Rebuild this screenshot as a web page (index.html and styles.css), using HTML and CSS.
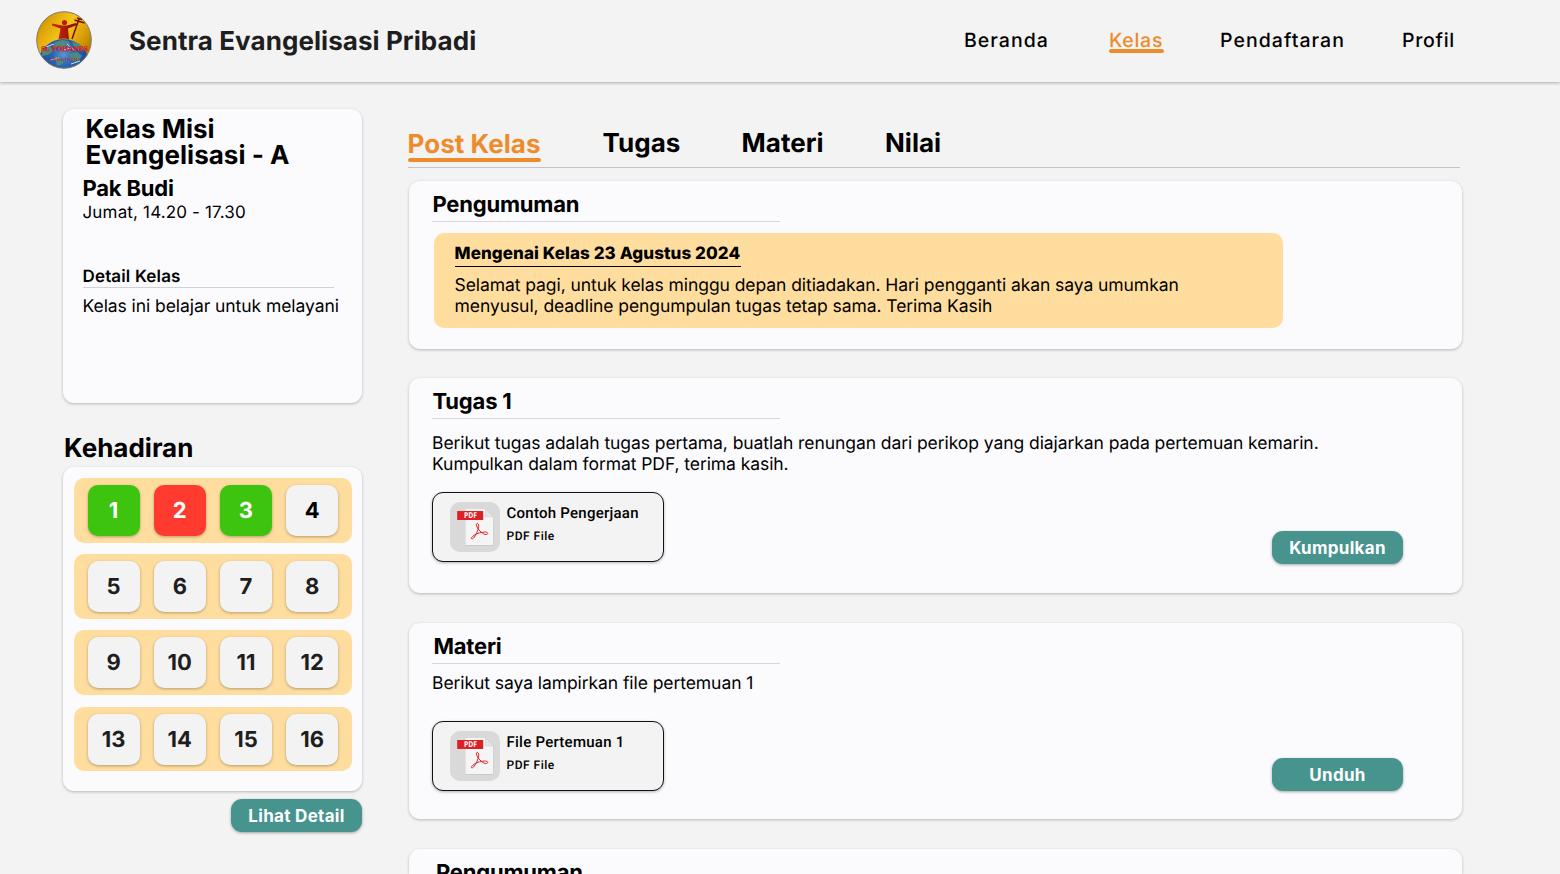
FILE: index.html
```html
<!DOCTYPE html>
<html lang="id">
<head>
<meta charset="utf-8">
<title>Sentra Evangelisasi Pribadi</title>
<link rel="stylesheet" href="styles.css">
</head>
<body>
<header class="topbar">
  <svg class="logo" viewBox="0 0 56 58">
    <defs>
      <linearGradient id="gold" x1="0" y1="0" x2="1" y2=".7">
        <stop offset="0" stop-color="#a87400"/><stop offset=".25" stop-color="#e0a60a"/>
        <stop offset=".5" stop-color="#f6c51c"/><stop offset=".75" stop-color="#dba008"/><stop offset="1" stop-color="#a87400"/>
      </linearGradient>
      <radialGradient id="sea" cx=".5" cy=".3" r=".7">
        <stop offset="0" stop-color="#5c95cb"/><stop offset=".3" stop-color="#2666b4"/><stop offset="1" stop-color="#0c3785"/>
      </radialGradient>
      <linearGradient id="robe" x1="0" y1="0" x2="1" y2="0">
        <stop offset="0" stop-color="#d8290c"/><stop offset="1" stop-color="#7d0c02"/>
      </linearGradient>
      <clipPath id="round"><ellipse cx="28" cy="29" rx="27.300" ry="28.300"/></clipPath>
    </defs>
    <g clip-path="url(#round)">
      <rect width="56" height="58" fill="url(#gold)"/>
      <circle cx="27.500" cy="54" r="26" fill="url(#sea)"/>
      <g fill="#4d8a7d">
        <path d="M19 31l7-2 6 1 3 3-5 2-3 4-5-3-5 1z"/>
        <path d="M36 30l7 3 5 5-4 2-6-3z"/>
        <path d="M6 39l8-4 4 4-6 5-6 1z"/>
        <path d="M33 43l8-2 5 4-5 6-6-2z"/>
        <path d="M19 45l7 2 1 6-6 2z"/>
      </g>
      <path d="M10 36l8-3m9 6l8-2m-21 12l9-2m8-14l7 6m-3 14l9-3" stroke="#c3dbe8" stroke-width="1" fill="none"/>
      <circle cx="28.500" cy="11.500" r="2.600" fill="#bd1d06"/>
      <path d="M16 12.500l10 2h5l9-2.500 1 2-9 3.500 1 11c-3-1.500-7-1.500-10.500 0l2-11-8.500-3z" fill="url(#robe)"/>
      <path d="M43 8l-7 20M38.500 9l10 3M41 7l5 1.500" stroke="#741004" stroke-width="1.500" fill="none"/>
    </g>
    <ellipse cx="28" cy="29" rx="27.300" ry="28.300" fill="none" stroke="#80796a" stroke-width="1"/>
    <text x="28.500" y="40.400" text-anchor="middle" textLength="47" lengthAdjust="spacingAndGlyphs" class="logo-name">St. YOHANES</text>
    <text x="28.500" y="49.500" text-anchor="middle" textLength="29" class="logo-sub">PENGINJIL</text>
  </svg>
  <div class="brand">Sentra Evangelisasi Pribadi</div>
  <nav class="nav">
    <a class="nav-item beranda">Beranda</a>
    <a class="nav-item kelas active">Kelas</a>
    <a class="nav-item pendaftaran">Pendaftaran</a>
    <a class="nav-item profil">Profil</a>
  </nav>
</header>

<main class="page">
  <aside class="sidebar">
    <section class="card class-card">
      <h1 class="class-name">Kelas Misi<br>Evangelisasi - A</h1>
      <div class="teacher">Pak Budi</div>
      <div class="schedule">Jumat, 14.20 - 17.30</div>
      <div class="detail-title">Detail Kelas</div>
      <div class="detail-text">Kelas ini belajar untuk melayani</div>
    </section>
    <h2 class="attendance-title">Kehadiran</h2>
    <section class="card attendance">
      <div class="week"><span class="tile present">1</span><span class="tile absent">2</span><span class="tile present">3</span><span class="tile next">4</span></div>
      <div class="week"><span class="tile">5</span><span class="tile">6</span><span class="tile">7</span><span class="tile">8</span></div>
      <div class="week"><span class="tile">9</span><span class="tile">10</span><span class="tile">11</span><span class="tile">12</span></div>
      <div class="week"><span class="tile">13</span><span class="tile">14</span><span class="tile">15</span><span class="tile">16</span></div>
    </section>
    <button class="btn detail-btn">Lihat Detail</button>
  </aside>

  <div class="content">
    <nav class="tabs">
      <a class="tab post active">Post Kelas</a>
      <a class="tab tugas">Tugas</a>
      <a class="tab materi">Materi</a>
      <a class="tab nilai">Nilai</a>
    </nav>

    <section class="card post-card announce">
      <h3 class="post-title">Pengumuman</h3>
      <div class="notice">
        <div class="notice-title">Mengenai Kelas 23 Agustus 2024</div>
        <p class="notice-text">Selamat pagi, untuk kelas minggu depan ditiadakan. Hari pengganti akan saya umumkan<br>menyusul, deadline pengumpulan tugas tetap sama. Terima Kasih</p>
      </div>
    </section>

    <section class="card post-card task">
      <h3 class="post-title">Tugas 1</h3>
      <p class="post-text">Berikut tugas adalah tugas pertama, buatlah renungan dari perikop yang diajarkan pada pertemuan kemarin.<br>Kumpulkan dalam format PDF, terima kasih.</p>
      <div class="post-foot">
        <div class="file">
          <svg class="file-icon" viewBox="0 0 50 50">
            <path d="M15.500 7.500h20.500l7.300 8v28.300H15.500z" fill="#c4c4c4"/>
            <path d="M15.500 7h20l7.500 8v28H15.500z" fill="#f5f5f5"/>
            <path d="M35.500 7v8H43z" fill="#e6e6e6" stroke="#c8c8c8" stroke-width=".5"/>
            <rect x="7.200" y="9" width="26" height="9" fill="#dd2025"/>
            <text x="20.400" y="16.400" text-anchor="middle" textLength="13" lengthAdjust="spacingAndGlyphs" class="pdf-label">PDF</text>
            <path d="M28.300 22.100c-1.600-2-2.700.4-1.200 3 1 2.300 4.200 5.600 6.700 6.900 2.300 1.200 4.700.1 3.700-1.200-1.400-1.600-7.400-.4-10.700 1-3.500 1.500-6.700 4.500-5 5 2.100.5 5-5.600 6.200-9.300.7-2.200 1-4.500.300-5.400z" fill="none" stroke="#dd2025" stroke-width="1"/>
          </svg>
          <div class="file-info"><div class="file-name">Contoh Pengerjaan</div><div class="file-type">PDF File</div></div>
        </div>
        <button class="btn submit">Kumpulkan</button>
      </div>
    </section>

    <section class="card post-card material">
      <h3 class="post-title">Materi</h3>
      <p class="post-text">Berikut saya lampirkan file pertemuan 1</p>
      <div class="post-foot">
        <div class="file">
          <svg class="file-icon" viewBox="0 0 50 50">
            <path d="M15.500 7.500h20.500l7.300 8v28.300H15.500z" fill="#c4c4c4"/>
            <path d="M15.500 7h20l7.500 8v28H15.500z" fill="#f5f5f5"/>
            <path d="M35.500 7v8H43z" fill="#e6e6e6" stroke="#c8c8c8" stroke-width=".5"/>
            <rect x="7.200" y="9" width="26" height="9" fill="#dd2025"/>
            <text x="20.400" y="16.400" text-anchor="middle" textLength="13" lengthAdjust="spacingAndGlyphs" class="pdf-label">PDF</text>
            <path d="M28.300 22.100c-1.600-2-2.700.4-1.200 3 1 2.300 4.200 5.600 6.700 6.900 2.300 1.200 4.700.1 3.700-1.200-1.400-1.600-7.400-.4-10.700 1-3.500 1.500-6.700 4.500-5 5 2.100.5 5-5.600 6.200-9.300.7-2.200 1-4.500.300-5.400z" fill="none" stroke="#dd2025" stroke-width="1"/>
          </svg>
          <div class="file-info"><div class="file-name">File Pertemuan 1</div><div class="file-type">PDF File</div></div>
        </div>
        <button class="btn download">Unduh</button>
      </div>
    </section>

    <section class="card post-card last">
      <h3 class="post-title">Pengumuman</h3>
    </section>
  </div>
</main>
</body>
</html>
```
FILE: styles.css
```css
* { box-sizing: border-box; }
body {
  margin: 0;
  height: 874px;
  overflow: hidden;
  background: #f3f3f3;
  color: #000;
  font-family: Inter, "Liberation Sans", sans-serif;
  text-rendering: geometricPrecision;
}
h1, h2, h3, p { margin: 0; }

.topbar {
  display: flex;
  height: 82px;
  padding: 11px 0 0 36px;
  background: #f3f3f3;
  box-shadow: 0 1px 3px rgba(0, 0, 0, .3);
}
.logo { width: 56px; height: 58px; }
.logo-name { font: bold 7px "Liberation Serif", serif; fill: #e0141c; stroke: #e0141c; stroke-width: .25px; }
.logo-sub { font: bold 4.500px "Liberation Serif", serif; fill: #c5203a; }
.brand {
  width: 836px;
  margin-left: 36px;
  padding-left: 1px;
  font-size: 26px;
  font-weight: 700;
  line-height: 61px;
  letter-spacing: .07px;
  color: #1e1e1e;
}
.nav { display: flex; padding-top: 17px; }
.nav-item {
  height: 25px;
  font-size: 19.500px;
  font-weight: 500;
  line-height: 24px;
  letter-spacing: 1.050px;
  white-space: nowrap;
}
.beranda { width: 145px; }
.kelas { width: 55px; margin-right: 56px; letter-spacing: .7px; }
.pendaftaran { width: 182px; }
.profil { letter-spacing: .7px; }
.nav-item.active { color: #ee8c2c; position: relative; }
.nav-item.active::after {
  content: "";
  position: absolute;
  left: 0; right: 0; top: 21px;
  height: 4px;
  border-radius: 2px;
  background: #ee8c2c;
}

.page { display: flex; padding-left: 63px; }
.card {
  background: #fbfbfe;
  border-radius: 11px;
  box-shadow: 0 1px 3px rgba(0, 0, 0, .25);
}
.sidebar { width: 299px; margin-right: 46px; padding-top: 27px; }
.class-card { height: 294px; padding: 8px 0 0 19.500px; }
.class-name { padding-left: 3px; font-size: 26px; font-weight: 700; line-height: 26px; letter-spacing: .03px; }
.teacher { margin-top: 6px; font-size: 22px; font-weight: 700; line-height: 28px; letter-spacing: -.2px; }
.schedule { font-size: 17px; line-height: 20px; letter-spacing: .16px; }
.detail-title {
  width: 251px;
  height: 21px;
  margin-top: 44px;
  border-bottom: 1px solid #d2d0dc;
  font-size: 17px;
  font-weight: 600;
  line-height: 21px;
  letter-spacing: .15px;
}
.detail-text { margin-top: 9px; font-size: 17.500px; line-height: 20px; letter-spacing: -.07px; white-space: nowrap; }
.attendance-title { margin-top: 33px; padding-left: 1px; font-size: 26px; font-weight: 700; line-height: 26px; height: 27px; }
.attendance {
  display: flex;
  flex-direction: column;
  gap: 11.600px;
  height: 324px;
  margin-top: 4px;
  padding: 11px 10px 0 11px;
}
.week {
  display: flex;
  gap: 14px;
  height: 64.600px;
  padding: 7px 0 0 13.500px;
  border-radius: 10px;
  background: #ffdd9f;
}
.tile {
  width: 52.200px;
  height: 51px;
  border-radius: 10px;
  background: #f3f3f3;
  box-shadow: 0 1px 3px rgba(0, 0, 0, .3);
  color: #1e1e1e;
  font-size: 22px;
  font-weight: 700;
  line-height: 52.500px;
  text-align: center;
}
.tile.present { background: #3dc40f; color: #fff; }
.tile.absent { background: #ff3b30; color: #fff; }
.tile.next { color: #000; }
.btn {
  display: block;
  width: 131px;
  height: 33px;
  padding: 1px 0 0;
  border: 0;
  border-radius: 11px;
  background: #46948d;
  box-shadow: 0 1px 3px rgba(0, 0, 0, .35);
  color: #fff;
  font: 700 17px/32px Inter, "Liberation Sans", sans-serif;
  letter-spacing: .3px;
}
.detail-btn { margin: 8px 0 0 auto; }

.content { width: 1054px; padding-top: 39px; }
.tabs {
  display: flex;
  width: 1052px;
  height: 47px;
  margin-bottom: 13px;
  padding-top: 9px;
  border-bottom: 1px solid #c4c4cc;
}
.tab { font-size: 26px; font-weight: 700; line-height: 28px; height: 26px; letter-spacing: .03px; white-space: nowrap; }
.tab.active { position: relative; top: 1px; color: #ee8c2c; }
.tab.active::after {
  content: "";
  position: absolute;
  left: 0; right: 0; top: 27px;
  height: 4px;
  border-radius: 2px;
  background: #ee8c2c;
}
.post { width: 133px; margin-right: 61.500px; text-indent: -.500px; }
.tugas { width: 139px; }
.materi { width: 143.500px; }

.post-card { width: 1053px; margin-left: 1px; padding-left: 23px; }
.post-title {
  width: 348px;
  height: 41px;
  padding: 10px 0 0 .5px;
  border-bottom: 1px solid #d6d6dd;
  font-size: 22px;
  font-weight: 700;
  line-height: 28px;
  letter-spacing: -.2px;
}
.announce { height: 168px; margin-bottom: 29px; }
.task { height: 215px; margin-bottom: 30px; }
.material { height: 196px; margin-bottom: 30px; }
.last { height: 25px; border-radius: 11px 11px 0 0; overflow: hidden; }
.notice {
  width: 849px;
  height: 95px;
  margin: 11px 0 0 2px;
  padding: 10px 0 0 20.500px;
  border-radius: 10px;
  background: #ffdd9f;
}
.notice-title {
  display: block;
  width: 286px;
  height: 24px;
  border-bottom: 1px solid #000;
  font-size: 17px;
  font-weight: 800;
  line-height: 22px;
  letter-spacing: .09px;
  white-space: nowrap;
}
.notice-text { margin-top: 9px; }
.notice-text, .post-text { font-size: 17.500px; line-height: 20.700px; letter-spacing: -.07px; white-space: nowrap; }
.post-text { padding-top: 15px; }
.post-foot { display: flex; justify-content: space-between; padding-right: 59px; }
.task .post-foot { margin-top: 17px; }
.material .post-foot { margin-top: 26px; }
.material .post-text { padding-top: 10px; }
.file {
  display: flex;
  width: 232px;
  height: 70px;
  padding: 9px 0 0 17px;
  border: 1.300px solid #111;
  border-radius: 11px;
  background: #f3f3f3;
  box-shadow: 0 1px 3px rgba(0, 0, 0, .3);
}
.file-icon { width: 50px; height: 50px; border-radius: 10px; background: #d9d9d9; }
.pdf-label { font: bold 8px "Open Sans", sans-serif; fill: #fff; }
.file-info { padding-left: 6.500px; font-family: Roboto, sans-serif; font-weight: 500; }
.file-name { font-size: 15px; line-height: 22px; letter-spacing: .25px; }
.file-type { font-size: 12px; line-height: 25px; letter-spacing: .5px; }
.submit { margin-top: 39px; }
.download { margin-top: 37px; }
.material .post-title { padding-left: 1.500px; }
.last .post-title { padding-left: 4px; }
```
